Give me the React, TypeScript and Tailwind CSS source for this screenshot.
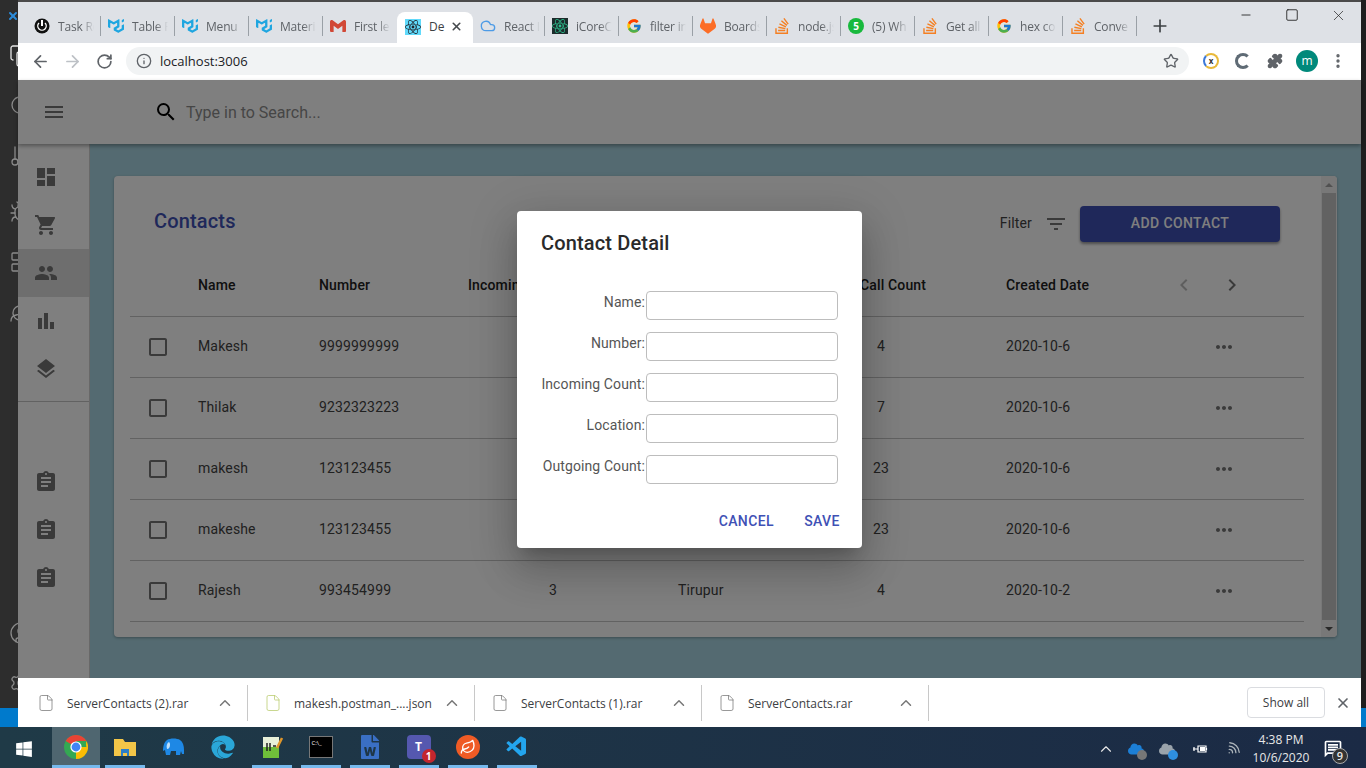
import { ArrowLeft, ArrowRight, Bug, ChevronUp, Cloud, Copy, File, GitBranch, Info, LayoutGrid, Leaf, Minus, MoreVertical, Plus, Puzzle, RotateCw, Search, Settings, Square, Star, UserCircle, Wifi, X } from "lucide-react";
import type { ReactNode } from "react";
import { FaCloud, FaEdge, FaFileWord, FaReact, FaWindows } from "react-icons/fa";
import { FcGoogle } from "react-icons/fc";
import {
  MdAssignment,
  MdBarChart,
  MdCheckBoxOutlineBlank,
  MdChevronLeft,
  MdChevronRight,
  MdDashboard,
  MdFilterList,
  MdLayers,
  MdMenu,
  MdMoreHoriz,
  MdOutlineMessage,
  MdPeople,
  MdSearch,
  MdShoppingCart
} from "react-icons/md";
import { SiGitlab, SiGmail, SiMui, SiStackoverflow } from "react-icons/si";
import { VscVscode } from "react-icons/vsc";

const chromeFont = "font-['Open_Sans','Noto_Sans',sans-serif]";

const muiIcon = <SiMui className="h-4 w-4 shrink-0 text-[#1fa6e0]" />;
const soIcon = <SiStackoverflow className="h-4 w-4 shrink-0 text-[#f48024]" />;
const googleIcon = <FcGoogle className="h-4 w-4 shrink-0" />;

const tabs: { title: string; icon: ReactNode }[] = [
  {
    title: "Task Report",
    icon: (
      <svg viewBox="0 0 16 16" className="h-4 w-4 shrink-0">
        <circle cx="8" cy="8" r="7.5" fill="#111" />
        <path d="M8 2v6" stroke="#fff" strokeWidth="2" />
        <path d="M5 5a4.2 4.2 0 1 0 6 0" stroke="#fff" strokeWidth="1.4" fill="none" />
      </svg>
    )
  },
  { title: "Table Pagination", icon: muiIcon },
  { title: "Menu", icon: muiIcon },
  { title: "Material", icon: muiIcon },
  { title: "First le", icon: <SiGmail className="h-4 w-4 shrink-0 text-[#d14836]" /> },
  { title: "De", icon: <span className="flex h-4 w-4 items-center justify-center bg-[#61dafb]"><FaReact className="h-4 w-4 text-[#20232a]" /></span> },
  { title: "React I", icon: <Cloud className="h-4 w-4 shrink-0 text-[#4d9be6]" /> },
  { title: "iCoreC", icon: <span className="flex h-4 w-4 shrink-0 items-center justify-center bg-[#1c2c2c]"><FaReact className="h-4 w-4 text-[#2fc08f]" /></span> },
  { title: "filter in", icon: googleIcon },
  { title: "Boards", icon: <SiGitlab className="h-4 w-4 shrink-0 text-[#fc6d26]" /> },
  { title: "node.js", icon: soIcon },
  {
    title: "(5) Wh",
    icon: (
      <span className="flex h-4 w-4 shrink-0 items-center justify-center rounded-full bg-[#18b93d] text-[10px] font-bold leading-none text-white">
        5
      </span>
    )
  },
  { title: "Get all", icon: soIcon },
  { title: "hex co", icon: googleIcon },
  { title: "Conve", icon: soIcon }
];

const downloads = [
  { name: "ServerContacts (2).rar", json: false },
  { name: "makesh.postman_....json", json: true },
  { name: "ServerContacts (1).rar", json: false },
  { name: "ServerContacts.rar", json: false }
];

const contacts = [
  { name: "Makesh", number: "9999999999", incoming: "3", location: "Tirupur", calls: "4", date: "2020-10-6" },
  { name: "Thilak", number: "9232323223", incoming: "3", location: "Tirupur", calls: "7", date: "2020-10-6" },
  { name: "makesh", number: "123123455", incoming: "3", location: "Tirupur", calls: "23", date: "2020-10-6" },
  { name: "makeshe", number: "123123455", incoming: "3", location: "Tirupur", calls: "23", date: "2020-10-6" },
  { name: "Rajesh", number: "993454999", incoming: "3", location: "Tirupur", calls: "4", date: "2020-10-2" }
];

const fields = ["Name:", "Number:", "Incoming Count:", "Location:", "Outgoing Count:"];

const rowGrid = "grid grid-cols-[68px_121px_149px_210px_182px_146px_146px_1fr] items-center border-b border-[#c4c4c4]";

function ChromeLogo() {
  return (
    <svg viewBox="0 0 24 24" className="h-6 w-6">
      <circle cx="12" cy="12" r="12" fill="#34a853" />
      <path d="M12 12 1.6 6A12 12 0 0 1 22.4 6H12z" fill="#ea4335" />
      <path d="M12 12h10.4A12 12 0 0 1 22.4 6 12 12 0 0 1 12 24z" fill="#fbbc05" />
      <circle cx="12" cy="12" r="5.6" fill="#fff" />
      <circle cx="12" cy="12" r="4.4" fill="#4285f4" />
    </svg>
  );
}

function ElephantLogo() {
  return (
    <svg viewBox="0 0 24 24" className="h-6 w-6">
      <path d="M5 5c3-2 10-2 13 0 3 2 4 6 4 10v4h-2l-1-3-1 4h-4v-4H9l-1 4H4l-1-5-2 1c0-4 1-9 4-11z" fill="#1e88e5" />
      <path d="M7 7c-2 1-3 4-2 7 2 0 3-2 3-4 0-1 0-2-1-3z" fill="#bfe0fb" />
    </svg>
  );
}

function TaskItem({ children, open, active }: { children: ReactNode; open?: boolean; active?: boolean }) {
  return (
    <div className="flex h-[41px] w-[49px] justify-center">
      <div className={`flex h-[41px] items-center justify-center border-b-[3px] pt-[2px] ${active ? "w-[48px] bg-[#4f6670]" : "w-[40px]"} ${open ? "border-[#76b9ed]" : "border-transparent"}`}>
        {children}
      </div>
    </div>
  );
}

function Browser() {
  return (
    <>
      <div className="h-[2px] bg-[#4a4a4a]" />
      <div className="flex h-[41px] items-start bg-[#dee1e6]">
        <div className="flex pl-[9px] pt-[10px]">
          {tabs.map((tab, index) =>
            tab.title === "De" ? (
              <div key={index} className="flex h-[31px] w-[76px] items-center rounded-t-lg bg-white pb-[2px] pl-2 pr-2">
                {tab.icon}
                <span className="ml-2 w-[16px] overflow-hidden text-xs text-[#3c4043]">{tab.title}</span>
                <X className="ml-[5px] h-[13px] w-[13px] text-[#45494d]" strokeWidth={3} />
              </div>
            ) : (
              <div key={index} className={`h-[31px] pt-1 ${tab.title === "React I" ? "w-[72px]" : "w-[74px]"}`}>
                <div className={`flex h-5 items-center pl-[7px] ${tab.title === "First le" ? "" : "border-r border-[#9aa0a6]"}`}>
                  {tab.icon}
                  <span className="ml-2 w-[36px] overflow-hidden whitespace-nowrap pt-[1px] text-xs tracking-[-0.2px] text-[#5f6368] [mask-image:linear-gradient(to_right,black_65%,transparent)]">
                    {tab.title}
                  </span>
                </div>
              </div>
            )
          )}
        </div>
        <Plus className="ml-[13px] mt-[14px] h-[20px] w-[20px] text-[#3c4043]" strokeWidth={2} />
        <div className="ml-auto flex h-[26px] text-[#222]">
          <div className="flex w-[46px] items-center justify-center"><Minus className="h-[14px] w-[14px]" strokeWidth={1.5} /></div>
          <div className="flex w-[46px] items-center justify-center"><Square className="h-[14px] w-[14px]" strokeWidth={1.5} /></div>
          <div className="flex w-[46px] items-center justify-center"><X className="h-[17px] w-[17px]" strokeWidth={1} /></div>
        </div>
      </div>
      <div className="flex h-[37px] items-start bg-white pt-1">
        <ArrowLeft className="ml-[13px] mt-[5px] h-[19px] w-[19px] text-[#5f6368]" strokeWidth={2.2} />
        <ArrowRight className="ml-[13px] mt-[5px] h-[19px] w-[19px] text-[#bdc1c6]" strokeWidth={2.2} />
        <RotateCw className="ml-[14px] mt-[6px] h-[17px] w-[17px] text-[#5f6368]" strokeWidth={2.4} />
        <div className="ml-[13px] flex h-7 w-[1063px] items-center rounded-full bg-[#f1f3f4] pl-[10px]">
          <Info className="h-4 w-4 text-[#5f6368]" />
          <span className="ml-2 pt-[1px] text-[13px] text-[#202124]">localhost:3006</span>
          <Star className="ml-auto mr-[10px] h-4 w-4 text-[#5f6368]" strokeWidth={2} />
        </div>
        <div className="ml-[14px] mt-[6px] flex h-4 w-4 items-center justify-center rounded-full border-2 border-[#e8b93a] border-l-[#3b78d8] text-[8px] font-bold text-[#333]">x</div>
        <div className="ml-4 mt-[6px] flex h-4 w-4 items-center justify-center rounded-full border-[3px] border-[#5f6b75] border-r-transparent text-[8px]" />
        <Puzzle className="ml-4 mt-[6px] h-4 w-4 fill-[#5f6368] text-[#5f6368]" />
        <div className="ml-[13px] mt-[3px] flex h-[22px] w-[22px] items-center justify-center rounded-full bg-[#00897b] text-xs font-medium text-white">m</div>
        <MoreVertical className="ml-[11px] mt-[5px] h-[18px] w-[18px] text-[#5f6368]" strokeWidth={2.5} />
      </div>
    </>
  );
}

function Sidebar() {
  const item = "flex h-12 items-center pl-4 text-[#757575]";
  return (
    <aside className="w-[72px] shrink-0 border-r border-[#d0d0d0] bg-white pt-[9px]">
      <div className={item}><MdDashboard className="h-6 w-6" /></div>
      <div className={item}><MdShoppingCart className="h-6 w-6" /></div>
      <div className={`${item} bg-[#dcdcdc]`}><MdPeople className="h-6 w-6" /></div>
      <div className={item}><MdBarChart className="h-6 w-6" /></div>
      <div className={item}><MdLayers className="h-6 w-6" /></div>
      <div className="mt-2 border-t border-[#c4c4c4] pt-14">
        <div className={item}><MdAssignment className="h-6 w-6" /></div>
        <div className={item}><MdAssignment className="h-6 w-6" /></div>
        <div className={item}><MdAssignment className="h-6 w-6" /></div>
      </div>
    </aside>
  );
}

function ContactsCard() {
  return (
    <div className="flex h-[461px] w-[1223px] overflow-hidden rounded bg-white tracking-[0.15px] shadow-[0_1px_3px_rgba(0,0,0,0.3)]">
      <div className="w-[1207px] pl-4 pt-[30px]">
        <div className="flex h-9 items-center pl-6 pr-[41px]">
          <h2 className="-mt-[6px] text-xl font-medium text-[#3f51b5]">Contacts</h2>
          <span className="-mt-[2px] ml-auto text-sm text-[#424242]">Filter</span>
          <MdFilterList className="ml-3 h-6 w-6 text-[#757575]" />
          <button className="ml-3 h-9 w-[200px] rounded bg-[#3f51b5] pb-[2px] text-sm font-medium tracking-[0.4px] text-white shadow-[0_2px_3px_rgba(0,0,0,0.4)]">
            ADD CONTACT
          </button>
        </div>
        <div className="mt-3 w-[1174px] text-sm">
          <div className={`${rowGrid} h-[63px] font-medium text-[#212121]`}>
            <div />
            <div>Name</div>
            <div>Number</div>
            <div className="whitespace-nowrap">Incoming Count</div>
            <div />
            <div className="whitespace-nowrap">Call Count</div>
            <div>Created Date</div>
            <div className="flex pl-[20px]">
              <MdChevronLeft className="h-6 w-6 text-[#bdbdbd]" />
              <MdChevronRight className="ml-6 h-6 w-6 text-[#757575]" />
            </div>
          </div>
          {contacts.map((contact) => (
            <div key={contact.name} className={`${rowGrid} h-[61px] text-[#424242]`}>
              <div className="pl-4"><MdCheckBoxOutlineBlank className="h-6 w-6 text-[#757575]" /></div>
              <div className="pb-[2px]">{contact.name}</div>
              <div className="pb-[2px]">{contact.number}</div>
              <div className="w-[170px] pb-[2px] text-center">{contact.incoming}</div>
              <div className="pb-[2px]">{contact.location}</div>
              <div className="w-[42px] pb-[2px] text-center">{contact.calls}</div>
              <div className="pb-[2px]">{contact.date}</div>
              <div className="pl-[60px]"><MdMoreHoriz className="h-6 w-6 text-[#757575]" /></div>
            </div>
          ))}
        </div>
      </div>
      <div className="flex w-4 shrink-0 flex-col bg-[#f1f1f1]">
        <div className="flex h-[17px] items-center justify-center"><div className="h-0 w-0 border-x-4 border-b-4 border-x-transparent border-b-[#a3a3a3]" /></div>
        <div className="mx-[1px] flex-1 bg-[#c4c4c4]" />
        <div className="flex h-[17px] items-center justify-center"><div className="h-0 w-0 border-x-4 border-t-4 border-x-transparent border-t-[#505050]" /></div>
      </div>
    </div>
  );
}

function ContactDialog() {
  return (
    <div className="w-[345px] rounded bg-white tracking-[0.15px] shadow-[0_11px_15px_-7px_rgba(0,0,0,0.2),0_24px_38px_3px_rgba(0,0,0,0.14),0_9px_46px_8px_rgba(0,0,0,0.12)]">
      <h2 className="px-6 py-4 text-xl font-medium leading-8 text-[#2a2a2a]">Contact Detail</h2>
      <div className="flex flex-col gap-3 px-6 pt-4 pb-[11px]">
        {fields.map((field) => (
          <div key={field} className="flex justify-end">
            <label className="mr-[1px] whitespace-nowrap text-sm leading-[22px] tracking-[0.1px] text-[#555]">{field}</label>
            <input className="h-[29px] w-[192px] shrink-0 rounded border border-[#bdbdbd] bg-white" />
          </div>
        ))}
      </div>
      <div className="flex justify-end gap-2 px-2 pb-[9px] pt-2">
        <button className="h-9 px-2 text-sm font-medium tracking-[0.4px] text-[#3f51b5]">CANCEL</button>
        <button className="h-9 w-16 text-sm font-medium tracking-[0.4px] text-[#3f51b5]">SAVE</button>
      </div>
    </div>
  );
}

function AppPage() {
  return (
    <div className="relative h-[598px] font-['Roboto',sans-serif]">
      <header className="relative z-10 flex h-16 items-center bg-white pl-6 shadow-[0_2px_4px_rgba(0,0,0,0.35)]">
        <MdMenu className="h-6 w-6 text-[#757575]" />
        <MdSearch className="ml-[88px] h-6 w-6 text-black" />
        <span className="ml-2 pt-[2px] text-base text-[#8c8c8c]">Type in to Search...</span>
      </header>
      <div className="flex h-[534px]">
        <Sidebar />
        <main className="flex-1 bg-[#a9d5e2] pl-6 pt-8">
          <ContactsCard />
        </main>
      </div>
      <div className="absolute inset-0 z-20 flex items-center justify-center bg-black/50">
        <ContactDialog />
      </div>
    </div>
  );
}

function DownloadBar() {
  return (
    <div className={`flex h-[49px] items-center bg-white text-xs text-[#3c4043] ${chromeFont}`}>
      <div className="flex pl-[3px]">
        {downloads.map((download) => (
          <div key={download.name} className="flex h-9 w-[227px] items-center border-r border-[#c8c8c8] pl-[16px]">
            <File className={`h-[18px] w-[18px] ${download.json ? "text-[#b7c96a]" : "text-[#777]"}`} strokeWidth={1} />
            <span className="ml-3 w-[138px] whitespace-nowrap pt-[2px]">{download.name}</span>
            <ChevronUp className="ml-[11px] h-[18px] w-[18px] text-[#777]" strokeWidth={2} />
          </div>
        ))}
      </div>
      <button className="ml-auto h-[31px] w-[78px] rounded border border-[#dadce0] text-xs font-medium text-[#3c4043]">Show all</button>
      <X className="ml-[10px] mr-[10px] h-4 w-4 text-[#5f6368]" strokeWidth={2.5} />
    </div>
  );
}

function Taskbar() {
  return (
    <div className={`flex h-[41px] items-center bg-linear-to-r from-[#1f3a47] to-[#1b2a45] pl-[2px] text-white ${chromeFont}`}>
      <div className="flex h-[41px] w-[49px] items-center pl-[13px] pt-[2px]"><FaWindows className="h-[18px] w-[18px]" /></div>
      <TaskItem open active><ChromeLogo /></TaskItem>
      <TaskItem open>
        <svg viewBox="0 0 24 24" className="h-6 w-6">
          <path d="M1 4h9l2 3h11v14H1z" fill="#f3c648" />
          <path d="M8 14h8v7h-2v-3h-4v3H8z" fill="#2b7fc9" />
        </svg>
      </TaskItem>
      <TaskItem><ElephantLogo /></TaskItem>
      <TaskItem><FaEdge className="h-6 w-6 text-[#2aa7d8]" /></TaskItem>
      <TaskItem open>
        <svg viewBox="0 0 24 24" className="h-6 w-6">
          <path d="M3 2h16v21H3z" fill="#e8f0d8" />
          <path d="M3 12h16v11H3z" fill="#6fbf3a" />
          <path d="M7 8v8M10 8v8M13 11h3" stroke="#222" strokeWidth="1.5" />
          <path d="m17 13 5-10" stroke="#e0962a" strokeWidth="2.5" />
        </svg>
      </TaskItem>
      <TaskItem open>
        <div className="flex h-[22px] w-[24px] items-start border border-[#777] bg-black pl-[2px] pt-[3px] text-[6px] leading-none text-white">C:\_</div>
      </TaskItem>
      <TaskItem open><FaFileWord className="h-6 w-6 text-[#3a6fc4]" /></TaskItem>
      <TaskItem open>
        <div className="relative flex h-6 w-6 items-center justify-center rounded-sm bg-[#5558af] text-xs font-bold">
          T
          <span className="absolute -bottom-[4px] -right-[5px] flex h-[14px] w-[14px] items-center justify-center rounded-full bg-[#c4262e] text-[10px] leading-none">1</span>
        </div>
      </TaskItem>
      <TaskItem open>
        <div className="flex h-6 w-6 items-center justify-center rounded-full bg-[#ef5b25]"><Leaf className="h-4 w-4 text-white" /></div>
      </TaskItem>
      <TaskItem open><VscVscode className="h-6 w-6 text-[#23a5ee]" /></TaskItem>
      <div className="ml-auto flex items-center pt-[2px] text-[#e8e8e8]">
        <ChevronUp className="h-[18px] w-[18px]" strokeWidth={1.5} />
        <div className="relative ml-[13px]">
          <FaCloud className="h-4 w-4 text-[#1c7fd6]" />
          <span className="absolute -bottom-[3px] -right-[3px] h-[10px] w-[10px] rounded-full bg-[#777]" />
        </div>
        <div className="relative ml-[15px]">
          <FaCloud className="h-4 w-4 text-[#9aa3ab]" />
          <span className="absolute -bottom-[3px] -right-[3px] h-[10px] w-[10px] rounded-full bg-[#2e8fe0]" />
        </div>
        <svg viewBox="0 0 16 12" className="ml-[17px] h-3 w-4" fill="none" stroke="#fff" strokeWidth="1.2">
          <path d="M6 3h8v6H6zM14.5 5v2M1 6h5M2 4v4" />
          <path d="M8 4h5v4H8z" fill="#fff" stroke="none" />
        </svg>
        <Wifi className="ml-[17px] h-[16px] w-[16px] rotate-45 text-[#aab2b8]" />
        <div className="ml-[4px] flex w-[72px] flex-col items-center text-xs leading-[18px]">
          <span>4:38 PM</span>
          <span>10/6/2020</span>
        </div>
        <div className="relative ml-[6px] mr-[23px]">
          <MdOutlineMessage className="h-5 w-5 text-white" />
          <span className="absolute -bottom-[5px] -right-[5px] flex h-[16px] w-[16px] items-center justify-center rounded-full border border-[#aaa] bg-[#333] text-[11px] font-semibold leading-none">9</span>
        </div>
      </div>
    </div>
  );
}

function EditorStrip() {
  const item = "flex h-[50px] items-center pl-[9px] text-[#8a8a8a]";
  return (
    <div className="flex w-[18px] shrink-0 flex-col overflow-hidden bg-[#2d2d2d]">
      <div className="flex h-[31px] items-center pl-[7px]"><X className="h-[12px] w-[12px] shrink-0 text-[#2b8ad8]" strokeWidth={4} /></div>
      <div className={`${item} text-[#e5e5e5]`}><Copy className="h-6 w-6 shrink-0" strokeWidth={1.3} /></div>
      <div className={item}><Search className="h-6 w-6 shrink-0" strokeWidth={1.3} /></div>
      <div className={item}><GitBranch className="h-6 w-6 shrink-0" strokeWidth={1.3} /></div>
      <div className={`${item} mt-[6px]`}><Bug className="h-6 w-6 shrink-0" strokeWidth={1.3} /></div>
      <div className={item}><LayoutGrid className="h-6 w-6 shrink-0" strokeWidth={1.3} /></div>
      <div className={item}><Leaf className="h-6 w-6 shrink-0" strokeWidth={1.3} /></div>
      <div className="flex-1" />
      <div className={item}><UserCircle className="h-6 w-6 shrink-0" strokeWidth={1.3} /></div>
      <div className={item}><Settings className="h-6 w-6 shrink-0" strokeWidth={1.3} /></div>
      <div className="h-[19px] shrink-0 bg-[#007acc]" />
    </div>
  );
}

export default function App() {
  return (
    <div className="h-[768px] w-[1366px] overflow-hidden">
      <div className="flex h-[727px]">
        <EditorStrip />
        <div className="w-[1343px] shrink-0">
          <div className={chromeFont}>
            <Browser />
          </div>
          <AppPage />
          <DownloadBar />
        </div>
        <div className="flex w-[5px] flex-col bg-[#1e1e1e]">
          <div className="flex-1" />
          <div className="h-[19px] bg-[#007acc]" />
        </div>
      </div>
      <Taskbar />
    </div>
  );
}
